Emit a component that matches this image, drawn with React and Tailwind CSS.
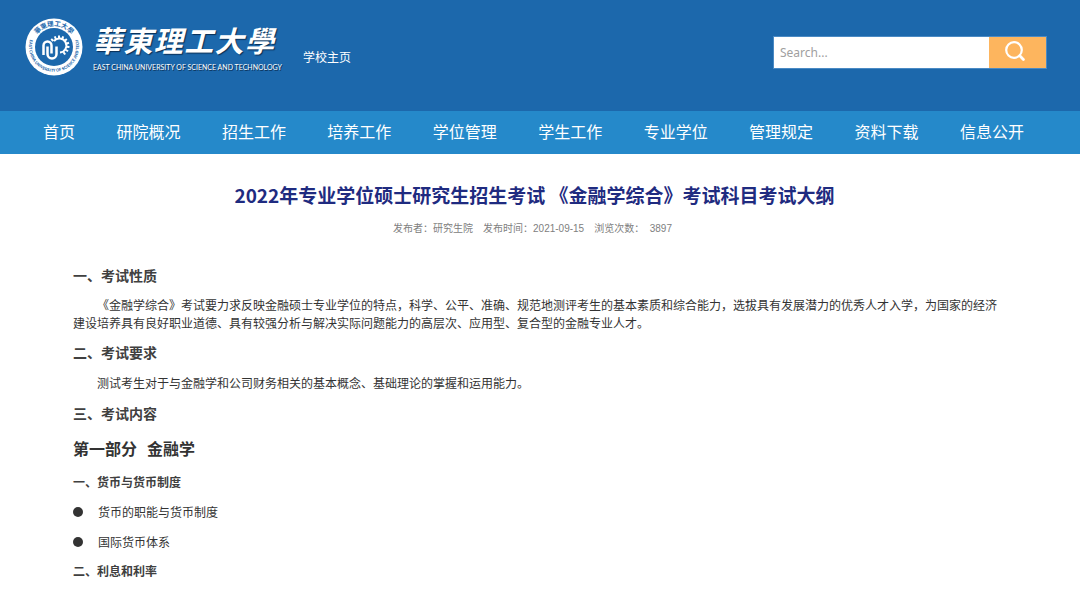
import { useState } from "react";

const navItems = [
  "首页",
  "研院概况",
  "招生工作",
  "培养工作",
  "学位管理",
  "学生工作",
  "专业学位",
  "管理规定",
  "资料下载",
  "信息公开",
];

// angles of the gear teeth, clockwise from the top
const teeth = [-48, -24, 0, 24, 48, 72, 96, 120, 144];

function Emblem() {
  return (
    <svg viewBox="0 0 116 116" className="size-[58px] shrink-0" aria-hidden="true">
      <circle cx="58" cy="58" r="57" fill="#fff" />
      <circle cx="58" cy="58" r="38" fill="#1c68ac" />
      <defs>
        <path id="ring-top" d="M 16 58 A 42 42 0 0 1 100 58" />
        <path id="ring-bottom" d="M 14 34 A 50 50 0 1 0 102 34" />
      </defs>
      <text fill="#1c68ac" fontSize="13" fontWeight="700" textAnchor="middle">
        <textPath href="#ring-top" startOffset="50%">華東理工大學</textPath>
      </text>
      <text fill="#1c68ac" fontSize="8" fontWeight="700" textAnchor="middle">
        <textPath href="#ring-bottom" startOffset="50%">
          EAST CHINA UNIVERSITY OF SCIENCE AND TECH
        </textPath>
      </text>
      <g stroke="#fff" fill="none">
        <path d="M 58 46 A 14 14 0 1 1 70 69" strokeWidth="4" />
        {teeth.map((a) => (
          <path key={a} d="M 68 41 V 35" strokeWidth="4" transform={`rotate(${a} 68 56)`} />
        ))}
        <path d="M 37 74 V 55 A 8 8 0 0 1 53 55 V 71" strokeWidth="5" />
        <path d="M 45 57 V 72 A 9 9 0 0 0 63 72 V 57" strokeWidth="5" />
      </g>
    </svg>
  );
}

function Logo() {
  return (
    <a href="#" className="flex items-center gap-2.5 text-white">
      <Emblem />
      <span className="flex flex-col w-[181px]">
        <span
          lang="zh-Hant"
          className="flex justify-between text-[29px] leading-10 font-bold italic [text-shadow:1px_1px_1px_#0b2f55]"
        >
          {[..."華東理工大學"].map((c) => (
            <span key={c}>{c}</span>
          ))}
        </span>
        <span className="font-[Lato,sans-serif] text-[7px] leading-4 whitespace-nowrap [text-shadow:1px_1px_0_#0b2f55]">
          EAST CHINA UNIVERSITY OF SCIENCE AND TECHNOLOGY
        </span>
      </span>
    </a>
  );
}

function Search() {
  const [keyword, setKeyword] = useState("");

  return (
    <form onSubmit={(e) => e.preventDefault()} className="flex h-[33px] w-[274px] border border-[#4a8ac4]">
      <input
        type="text"
        aria-label="Search"
        placeholder="Search..."
        value={keyword}
        onChange={(e) => setKeyword(e.target.value)}
        className="min-w-0 flex-1 bg-white px-1.5 font-['Noto_Sans',sans-serif] text-xs text-gray-700 placeholder:text-[#a0a0a0] outline-none"
      />
      <button
        type="submit"
        aria-label="Submit search"
        className="flex w-[57px] items-start bg-[#fdb55e] pt-1 pl-4"
      >
        <svg viewBox="0 0 20 20" className="size-5" fill="none" stroke="#fff" strokeLinecap="round">
          <circle cx="9" cy="9" r="7.8" strokeWidth="2.2" />
          <path d="M14.8 14.8 L18.4 18.4" strokeWidth="2.8" />
        </svg>
      </button>
    </form>
  );
}

function SectionTitle({ children }) {
  return <h2 className="text-sm leading-5 font-bold text-[#404040]">{children}</h2>;
}

function Topic({ children }) {
  return (
    <li className="flex items-center gap-[15px]">
      <span className="size-2.5 rounded-full bg-[#333333]" />
      <span>{children}</span>
    </li>
  );
}

export default function App() {
  return (
    <div className="min-h-screen bg-white font-['Noto_Sans_CJK_SC',sans-serif] text-[#333333]">
      <header className="bg-[#1c68ac]">
        <div className="flex h-[111px] items-start justify-between pl-[25px] pr-[33px]">
          <div className="flex items-center gap-[29px] pt-[18px]">
            <Logo />
            <a href="#" className="pt-5 text-xs text-white">
              学校主页
            </a>
          </div>
          <div className="pt-9">
            <Search />
          </div>
        </div>
        <nav className="bg-[#2589ca]">
          <ul className="flex h-[43px] items-center justify-between pb-1 pl-[43px] pr-14">
            {navItems.map((item) => (
              <li key={item}>
                <a href="#" className="text-base text-white">
                  {item}
                </a>
              </li>
            ))}
          </ul>
        </nav>
      </header>

      <main className="pt-[27px] pl-[73px] pr-20">
        <h1 className="pr-1 text-center text-[19px] leading-7 font-bold text-[#1f2b80]">
          2022年专业学位硕士研究生招生考试 《金融学综合》考试科目考试大纲
        </h1>
        <p className="mt-2.5 flex justify-center gap-2.5 pr-2 font-['Liberation_Sans','Noto_Sans_CJK_SC',sans-serif] text-[10px] leading-5 text-[#808080]">
          <span>发布者：研究生院</span>
          <span>发布时间：2021-09-15</span>
          <span className="whitespace-pre">浏览次数：  3897</span>
        </p>

        <article className="mt-[26px] text-xs leading-[18px]">
          <SectionTitle>一、考试性质</SectionTitle>
          <p className="mt-[11px] mb-2.5 indent-6">
            《金融学综合》考试要力求反映金融硕士专业学位的特点，科学、公平、准确、规范地测评考生的基本素质和综合能力，选拔具有发展潜力的优秀人才入学，为国家的经济建设培养具有良好职业道德、具有较强分析与解决实际问题能力的高层次、应用型、复合型的金融专业人才。
          </p>
          <SectionTitle>二、考试要求</SectionTitle>
          <p className="mt-3 mb-[11px] indent-6">测试考生对于与金融学和公司财务相关的基本概念、基础理论的掌握和运用能力。</p>
          <SectionTitle>三、考试内容</SectionTitle>
          <h2 className="my-[13px] flex gap-2.5 text-base leading-6 font-bold">
            <span>第一部分</span>
            <span>金融学</span>
          </h2>
          <h3 className="font-bold text-[#404040]">一、货币与货币制度</h3>
          <ul className="mt-3 mb-[11px] space-y-3">
            <Topic>货币的职能与货币制度</Topic>
            <Topic>国际货币体系</Topic>
          </ul>
          <h3 className="font-bold text-[#404040]">二、利息和利率</h3>
        </article>
      </main>
    </div>
  );
}
